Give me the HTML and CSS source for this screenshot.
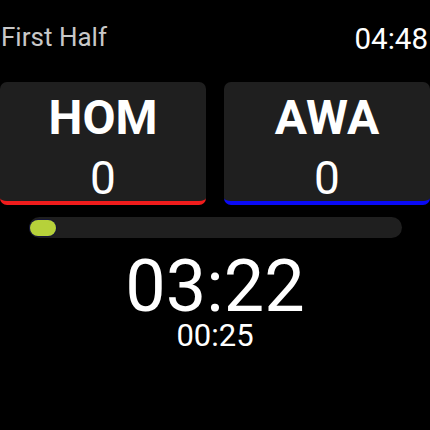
FILE: index.html
```html
<!DOCTYPE html>
<html lang="en">
<head>
    <meta charset="UTF-8">
    <meta name="viewport" content="width=device-width, initial-scale=1.0">
    <title>Match Timer</title>
    <link rel="stylesheet" href="styles.css">
</head>
<body>
    <div class="screen">
        <div class="top-bar">
            <span class="period">First Half</span>
            <span class="clock">04:48</span>
        </div>

        <div class="teams">
            <div class="team home">
                <div class="team-name">HOM</div>
                <div class="team-score">0</div>
            </div>
            <div class="team away">
                <div class="team-name">AWA</div>
                <div class="team-score">0</div>
            </div>
        </div>

        <div class="progress">
            <div class="progress-fill" style="width: 7%"></div>
        </div>

        <div class="timer">
            <div class="timer-main">03:22</div>
            <div class="timer-sub">00:25</div>
        </div>
    </div>
</body>
</html>
```

FILE: styles.css
```css
body {
    margin: 0;
    background: #000;
    font-family: Roboto, "Noto Sans", sans-serif;
    color: #fff;
}
.screen {
    width: 430px;
    height: 430px;
    overflow: hidden;
}
.top-bar {
    display: flex;
    justify-content: space-between;
    align-items: flex-start;
    padding: 0 2px 0 1px;
    height: 82px;
}
.period {
    font-size: 26px;
    line-height: 1;
    color: #c8c8c8;
    margin-top: 24px;
}
.clock {
    font-size: 29.5px;
    line-height: 1;
    margin-top: 25px;
}
.teams {
    display: flex;
    gap: 18px;
}
.team {
    flex: 1;
    height: 119px;
    background: #1f1f1f;
    border-radius: 7px;
    border-bottom: 4px solid;
    display: flex;
    flex-direction: column;
    align-items: center;
}
.home {
    border-color: #f01c1c;
}
.away {
    border-color: #0a0af5;
}
.team-name {
    font-size: 48px;
    font-weight: bold;
    line-height: 1;
    margin-top: 12px;
}
.team-score {
    font-size: 46px;
    line-height: 1;
    margin-top: 13px;
}
.progress {
    display: flex;
    align-items: center;
    margin: 12px 28px 0 29px;
    height: 21px;
    padding: 0 1px;
    background: #1f1f1f;
    border-radius: 11px;
}
.progress-fill {
    height: 16px;
    background: #b6d13a;
    border-radius: 8px;
    box-shadow: 0 0 0 1px #14163a;
}
.timer {
    text-align: center;
}
.timer-main {
    font-size: 72px;
    line-height: 0.85;
    margin-top: 18px;
}
.timer-sub {
    font-size: 31px;
    line-height: 1;
    margin-top: 3px;
}
```
